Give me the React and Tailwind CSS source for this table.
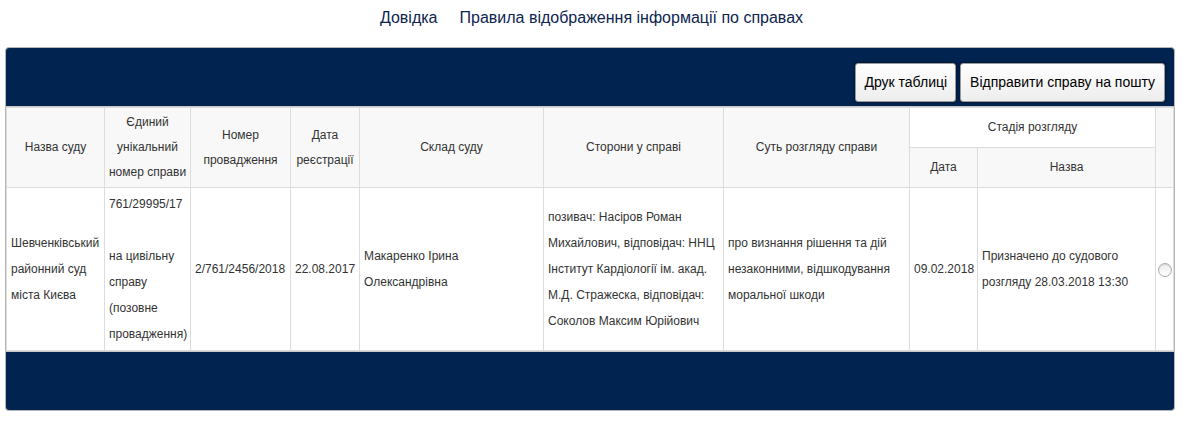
import React from "react";

const th = "border border-[#dcdcdc] bg-[#f8f8f8] px-[4px] py-[2px] text-center align-middle font-normal leading-[25px]";
const td = "border border-[#dcdcdc] px-[4px] py-[3px] align-middle leading-[26px]";

function CaseTable() {
  return (
    <table className="w-full table-fixed border-collapse text-[12px] text-[#333]">
      <colgroup>
        <col className="w-[98px]" />
        <col className="w-[86px]" />
        <col className="w-[100px]" />
        <col className="w-[69px]" />
        <col className="w-[184px]" />
        <col className="w-[180px]" />
        <col className="w-[186px]" />
        <col className="w-[68px]" />
        <col className="w-[178px]" />
        <col />
      </colgroup>
      <thead>
        <tr className="h-[40px]">
          <th rowSpan={2} className={th}>Назва суду</th>
          <th rowSpan={2} className={th + " !px-0 whitespace-nowrap"}>
            Єдиний
            <br />
            унікальний
            <br />
            номер справи
          </th>
          <th rowSpan={2} className={th}>Номер провадження</th>
          <th rowSpan={2} className={th}>Дата реєстрації</th>
          <th rowSpan={2} className={th}>Склад суду</th>
          <th rowSpan={2} className={th}>Сторони у справі</th>
          <th rowSpan={2} className={th}>Суть розгляду справи</th>
          <th colSpan={2} className={th + " !bg-white"}>Стадія розгляду</th>
          <th rowSpan={2} className={th}></th>
        </tr>
        <tr className="h-[40px]">
          <th className={th}>Дата</th>
          <th className={th}>Назва</th>
        </tr>
      </thead>
      <tbody className="bg-white">
        <tr>
          <td className={td}>Шевченківський районний суд міста Києва</td>
          <td className={td}>
            761/29995/17
            <br />
            <br />
            на цивільну справу (позовне провадження)
          </td>
          <td className={td}>2/761/2456/2018</td>
          <td className={td}>22.08.2017</td>
          <td className={td}>Макаренко Ірина Олександрівна</td>
          <td className={td}>
            позивач: Насіров Роман Михайлович, відповідач: ННЦ Інститут Кардіології ім. акад. М.Д. Стражеска, відповідач: Соколов Максим Юрійович
          </td>
          <td className={td}>про визнання рішення та дій незаконними, відшкодування моральної шкоди</td>
          <td className={td}>09.02.2018</td>
          <td className={td}>Призначено до судового розгляду 28.03.2018 13:30</td>
          <td className={td + " !px-0 text-center"}>
            <span className="inline-block h-[14px] w-[14px] rounded-full border border-[#a9a9a9] bg-gradient-to-b from-[#ececec] to-white align-middle shadow-[inset_0_1px_1px_rgba(0,0,0,0.1)]"></span>
          </td>
        </tr>
      </tbody>
    </table>
  );
}

export default function App() {
  return (
    <div className="w-[1183px] h-[423px] bg-white font-['Liberation_Sans',Arial,sans-serif]">
      <div className="flex h-[47px] justify-center gap-[22px] pt-[6px] text-[16px] text-[#0c2550]">
        <a className="cursor-pointer">Довідка</a>
        <a className="cursor-pointer">Правила відображення інформації по справах</a>
      </div>
      <div className="ml-[5px] w-[1170px] overflow-hidden rounded-[4px] border border-[#b5b5b5] bg-[#00234f]">
        <div className="flex h-[58px] items-end justify-end gap-[4px] pb-[4px] pr-[9px]">
          <button className="h-[39px] rounded-[3px] border border-[#9a9a9a] bg-gradient-to-b from-white to-[#ededed] px-[8px] text-[14px] text-black shadow-[0_0_3px_rgba(0,0,0,0.6)]">
            Друк таблиці
          </button>
          <button className="h-[39px] rounded-[3px] border border-[#9a9a9a] bg-gradient-to-b from-white to-[#ededed] px-[9px] text-[14px] text-black shadow-[0_0_3px_rgba(0,0,0,0.6)]">
            Відправити справу на пошту
          </button>
        </div>
        <div className="border-y border-[#c8c8c8] bg-white">
          <CaseTable />
        </div>
        <div className="h-[58px]"></div>
      </div>
    </div>
  );
}
